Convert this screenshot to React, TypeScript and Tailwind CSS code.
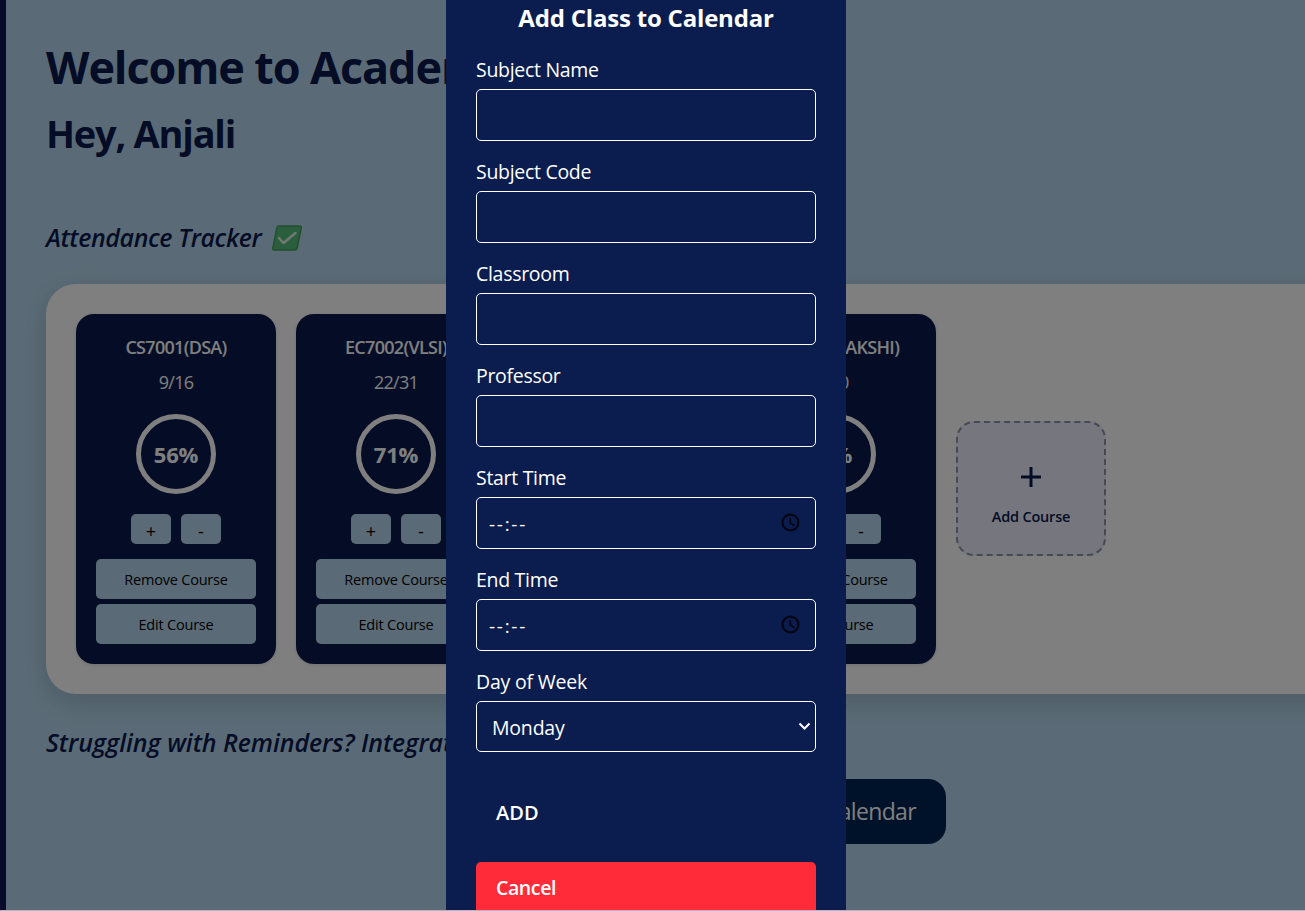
import React from "react";

type Course = { title: string; count: string; percent: string };

const courses: Course[] = [
  { title: "CS7001(DSA)", count: "9/16", percent: "56%" },
  { title: "EC7002(VLSI)", count: "22/31", percent: "71%" },
  { title: "CS7003(OS)", count: "12/20", percent: "60%" },
  { title: "CS7004(SAKSHI)", count: "0/0", percent: "0%" },
];

function CheckMark() {
  return (
    <svg width="30" height="26" viewBox="0 0 30 26" className="ml-[11px] -mt-px shrink-0">
      <path d="M6.7 1 H27.5 Q29.8 1 29.3 3.2 L25.2 23 Q24.7 25 22.4 25 H2.5 Q0.3 25 .8 22.8 L4.8 2.8 Q5.2 1 6.7 1Z" fill="#54bd78" stroke="#429c5c" strokeWidth="1.4" />
      <path d="M7 13 L11.5 18 L23.5 8" fill="none" stroke="#e4f0e8" strokeWidth="2.5" strokeLinecap="round" strokeLinejoin="round" />
    </svg>
  );
}

function CourseCard({ title, count, percent }: Course) {
  return (
    <div className="flex h-[350px] w-[200px] shrink-0 flex-col items-center rounded-[18px] bg-[#0a1a4d] px-5 pt-5 shadow-[0_1px_4px_rgba(0,0,0,0.12)]">
      <div className="h-[26px] whitespace-nowrap text-[18px] font-semibold leading-[26px] tracking-[-0.7px] text-white">{title}</div>
      <div className="mt-[10px] h-6 text-[18px] leading-6 tracking-[-0.75px] text-white">{count}</div>
      <div className="mt-5 flex h-20 w-20 shrink-0 items-center justify-center rounded-full border-[5px] border-white pt-px text-[22px] font-bold tracking-[-0.2px] text-white">{percent}</div>
      <div className="mt-5 flex gap-[10px] text-[18px] text-black">
        <button className="h-[30px] w-10 rounded-[5px] bg-[#b5d7ee] pt-1 leading-none">+</button>
        <button className="h-[30px] w-10 rounded-[5px] bg-[#b5d7ee] pt-1 leading-none">-</button>
      </div>
      <button className="mt-[15px] h-10 w-full shrink-0 rounded-[5px] bg-[#b5d7ee] pt-px text-[14.5px] tracking-[-0.2px] text-black">Remove Course</button>
      <button className="mt-[5px] h-10 w-full shrink-0 rounded-[5px] bg-[#b5d7ee] pt-px text-[14.5px] tracking-[-0.2px] text-black">Edit Course</button>
    </div>
  );
}

function Field({ label, time }: { label: string; time?: boolean }) {
  return (
    <div className="mb-[17px]">
      <label className="block h-7 text-[19.5px] leading-7 tracking-[-0.3px]">{label}</label>
      <div className="mt-[5px] flex h-[52px] items-center justify-between rounded-[5px] border border-white pl-[12px] pr-[14px]">
        {time && (
          <>
            <span className="pt-[2px] text-[19px] leading-none tracking-[1.7px]">--:--</span>
            <svg width="21" height="21" viewBox="0 0 24 24" className="mb-[2px]" fill="#000410" stroke="#000410" strokeWidth="0.3">
              <path d="M11.99 2C6.47 2 2 6.48 2 12s4.47 10 9.99 10C17.52 22 22 17.52 22 12S17.52 2 11.99 2zM12 20c-4.42 0-8-3.58-8-8s3.58-8 8-8 8 3.58 8 8-3.58 8-8 8z" />
              <path d="M12.5 7H11v6l5.25 3.15.75-1.23-4.5-2.67z" />
            </svg>
          </>
        )}
      </div>
    </div>
  );
}

function Dashboard() {
  return (
    <div className="flex h-[910px] w-full overflow-hidden bg-[#b5d7ee] text-[#0a1a4d]">
      <div className="w-[6px] shrink-0 bg-[#0a1650]" />
      <main className="flex min-w-0 flex-1 flex-col pl-10">
        <h1 className="mt-[37px] h-[60px] whitespace-nowrap text-[45px] font-bold leading-[60px] tracking-[-1.12px]">Welcome to Academix</h1>
        <h2 className="mt-[9px] h-[54px] whitespace-nowrap text-[38px] font-bold leading-[54px] tracking-[-1.25px]">Hey, Anjali</h2>
        <div className="mt-[58px] flex h-10 items-center text-[25px] font-semibold italic tracking-[-0.4px]">
          Attendance Tracker
          <CheckMark />
        </div>
        <section className="mt-[26px] flex h-[410px] w-[1300px] shrink-0 items-center gap-5 rounded-[30px] bg-white px-[30px] shadow-[0_8px_26px_rgba(0,0,0,0.16)]">
          {courses.map((course) => (
            <CourseCard key={course.title} {...course} />
          ))}
          <button className="mb-px flex h-[135px] w-[150px] shrink-0 flex-col items-center rounded-[18px] border-2 border-dashed border-[#8e92a8] bg-[#eceefc] pt-[34px]">
            <svg width="20" height="20" viewBox="0 0 20 20" className="mt-[10px]">
              <path d="M10 0v20M0 10h20" stroke="#0a1a4d" strokeWidth="3" />
            </svg>
            <span className="mt-5 text-[14.5px] font-semibold leading-5 tracking-[-0.2px]">Add Course</span>
          </button>
        </section>
        <div className="mt-[29px] h-10 whitespace-nowrap text-[25px] font-semibold italic leading-[39px] tracking-[-0.07px]">Struggling with Reminders? Integrate</div>
        <button className="ml-[500px] mt-4 h-[65px] w-[400px] shrink-0 whitespace-nowrap rounded-[18px] bg-[#002255] pr-[30px] text-right text-[23px] tracking-[-0.65px] text-white">Open Google Calendar</button>
      </main>
    </div>
  );
}

export default function App() {
  return (
    <div className="relative h-[911px] w-full overflow-hidden bg-[#b9b2c0] font-['Open_Sans','Noto_Sans',sans-serif]">
      <Dashboard />
      <div className="absolute inset-x-0 top-0 flex h-[910px] bg-black/50 pl-[446px]">
        <div className="h-full w-[400px] overflow-hidden bg-[#0b1d4e] px-[30px] text-white">
          <h3 className="h-9 whitespace-nowrap text-center text-[24px] font-bold leading-9 tracking-[-0.2px]">Add Class to Calendar</h3>
          <div className="mt-5">
            <Field label="Subject Name" />
            <Field label="Subject Code" />
            <Field label="Classroom" />
            <Field label="Professor" />
            <Field label="Start Time" time />
            <Field label="End Time" time />
            <label className="block h-7 text-[19.5px] leading-7 tracking-[-0.2px]">Day of Week</label>
            <div className="mt-[5px] flex h-[51px] items-center justify-between rounded-[5px] border border-white pl-[15px] pr-[4px] text-[19.5px] tracking-[-0.2px]">
              <span className="pt-[2px]">Monday</span>
              <svg width="13" height="9" viewBox="0 0 13 9">
                <path d="M1.5 1.5 L6.5 6.5 L11.5 1.5" fill="none" stroke="#fff" strokeWidth="2" />
              </svg>
            </div>
          </div>
          <button className="mt-[35px] block h-[52px] w-full rounded-[5px] px-5 text-left text-[20px] font-semibold">ADD</button>
          <button className="mt-[23px] block h-[52px] w-full rounded-[5px] bg-[#ff2b38] px-5 text-left text-[19.5px] font-semibold tracking-[-0.4px]">Cancel</button>
        </div>
      </div>
    </div>
  );
}
